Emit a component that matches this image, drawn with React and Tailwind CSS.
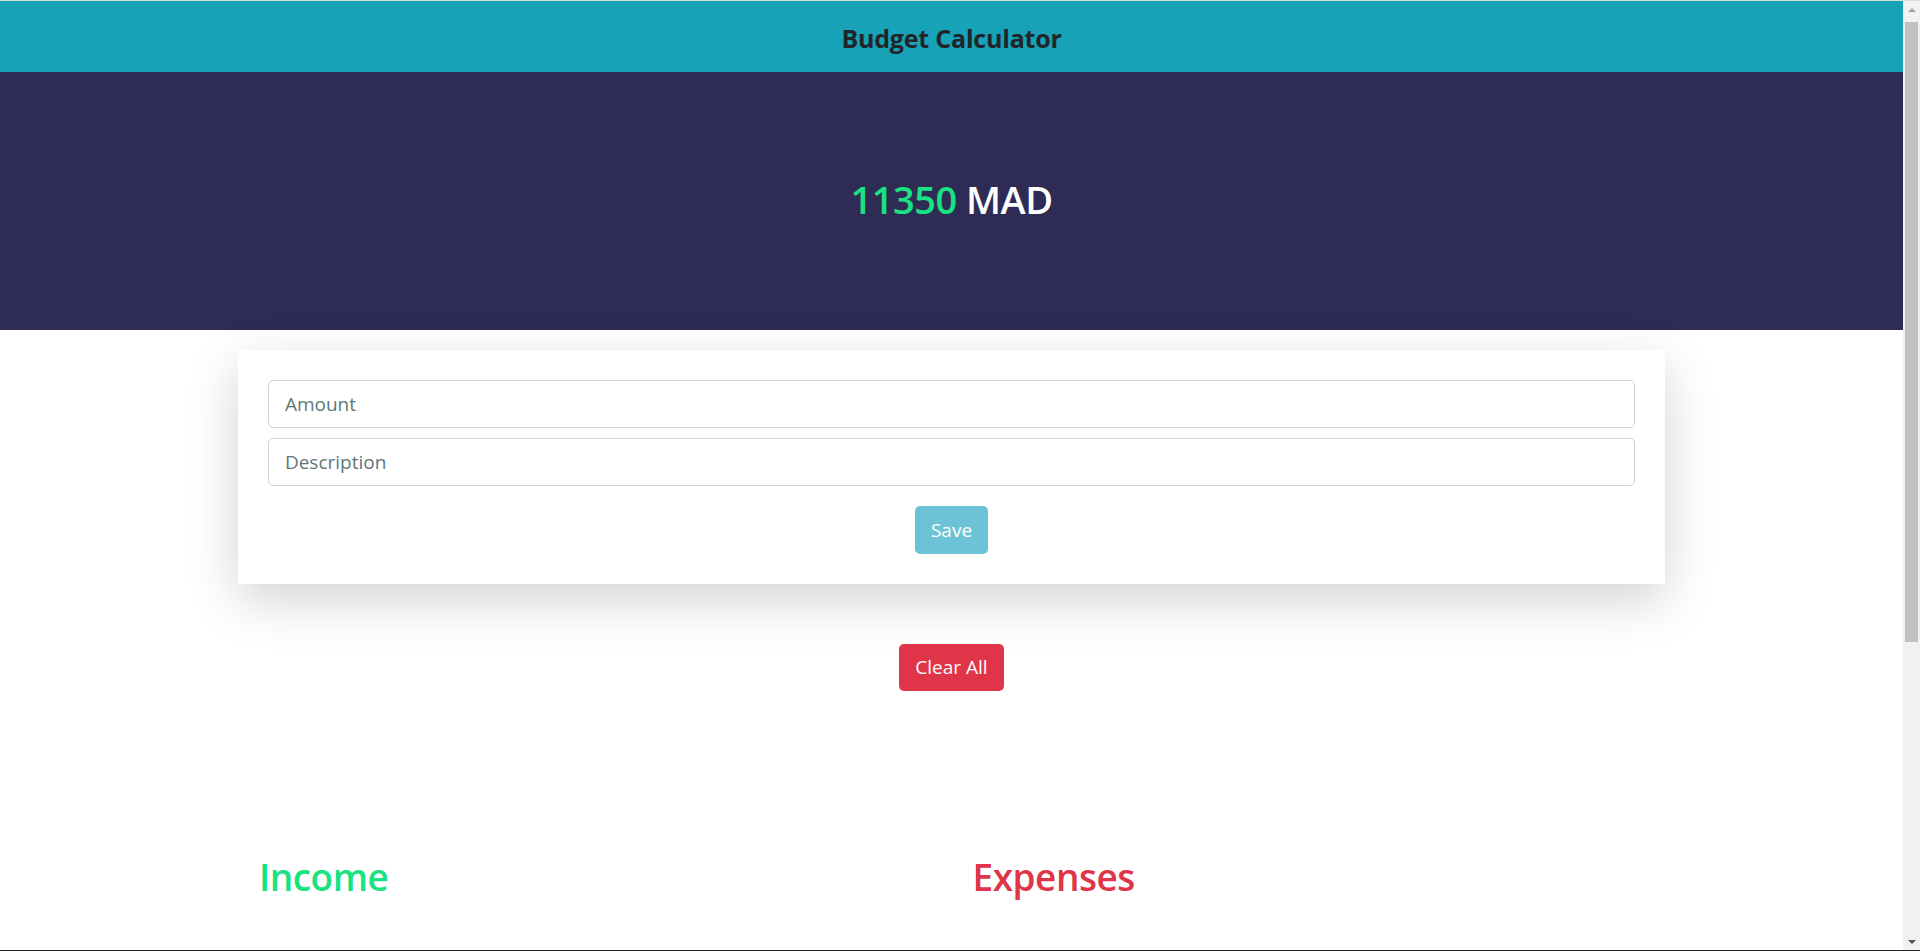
export default function App() {
  const font = { fontFamily: '"Open Sans", "Noto Sans", sans-serif' };
  return (
    <div className="h-[951px] overflow-hidden flex bg-white text-[#212529] border-t border-[#dcdcdc] border-b border-b-[#222]" style={font}>
      <div className="flex-1 min-w-0">
        <header className="h-[71px] bg-[#17a2b8] flex items-center justify-center">
          <h1 className="text-[25px] font-bold text-[#212529] tracking-[-0.2px] leading-none pt-[4px]">Budget Calculator</h1>
        </header>
        <section className="h-[258px] bg-[#2e2c54] flex items-center justify-center">
          <h2 className="text-[38px] font-semibold tracking-[-0.5px] -mt-[4px]">
            <span className="text-[#19e283]">11350</span>{" "}
            <span className="text-white">MAD</span>
          </h2>
        </section>
        <main className="w-3/4 mx-auto">
          <div className="mt-[20px] bg-white px-[30px] pt-[30px] pb-[30px] shadow-[0_16px_48px_rgba(0,0,0,0.175)]">
            <input
              placeholder="Amount"
              className="block w-full h-[48px] px-[16px] text-[19px] border border-[#ced4da] rounded-[5px] placeholder:text-[#5f7679] outline-none"
            />
            <input
              placeholder="Description"
              className="block w-full h-[48px] mt-[10px] px-[16px] text-[19px] border border-[#ced4da] rounded-[5px] placeholder:text-[#5f7679] outline-none"
            />
            <div className="flex justify-center mt-[20px]">
              <button className="h-[48px] px-[16px] text-[19px] text-white bg-[#6cc3d5] rounded-[5px]">Save</button>
            </div>
          </div>
          <div className="flex justify-center mt-[60px]">
            <button className="h-[47px] px-[16px] text-[19px] text-white bg-[#e03448] rounded-[5px]">Clear All</button>
          </div>
          <div className="grid grid-cols-2 mt-[158px]">
            <div className="pl-[21px]">
              <h3 className="text-[37px] font-semibold text-[#19e283] tracking-[-0.5px]">Income</h3>
              <ul className="mt-4"></ul>
            </div>
            <div className="pl-[21px]">
              <h3 className="text-[37px] font-semibold text-[#e03448] tracking-[-0.5px]">Expenses</h3>
              <ul className="mt-4"></ul>
            </div>
          </div>
        </main>
      </div>
      <div className="w-[17px] shrink-0 bg-[#f1f1f1] flex flex-col items-center">
        <div className="h-[17px] w-full flex items-center justify-center">
          <div className="w-0 h-0 border-l-[4px] border-r-[4px] border-b-[4px] border-l-transparent border-r-transparent border-b-[#a3a3a3]"></div>
        </div>
        <div className="w-[13px] h-[620px] mt-[4px] bg-[#c1c1c1]"></div>
        <div className="flex-1"></div>
        <div className="h-[17px] w-full flex items-center justify-center">
          <div className="w-0 h-0 border-l-[4px] border-r-[4px] border-t-[4px] border-l-transparent border-r-transparent border-t-[#505050]"></div>
        </div>
      </div>
    </div>
  );
}
